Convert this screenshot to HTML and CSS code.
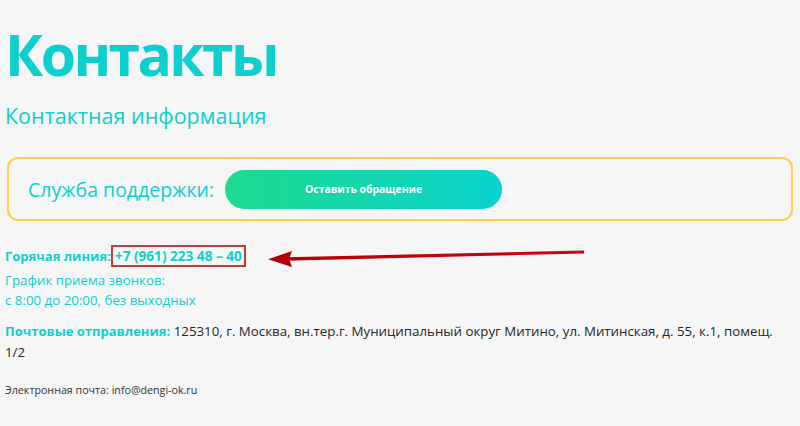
FILE: index.html
```html
<!DOCTYPE html>
<html lang="ru">
<head>
<meta charset="utf-8">
<title>Контакты</title>
<link rel="stylesheet" href="styles.css">
</head>
<body>
<main class="page">
  <h1 class="title">Контакты</h1>
  <h2 class="subtitle">Контактная информация</h2>
  <section class="support">
    <span class="support-label">Служба поддержки:</span>
    <a class="support-btn" href="#">Оставить обращение</a>
  </section>
  <div class="contacts">
    <p class="hotline"><b>Горячая линия:</b><span class="phone">+7 (961) 223 48 – 40</span></p>
    <p class="schedule">График приема звонков:<br>с 8:00 до 20:00, без выходных</p>
    <p class="post"><b>Почтовые отправления:</b> 125310, г. Москва, вн.тер.г. Муниципальный округ Митино, ул. Митинская, д. 55, к.1, помещ. 1/2</p>
    <p class="email">Электронная почта: info@dengi-ok.ru</p>
  </div>
  <svg class="arrow" width="330" height="30" viewBox="0 0 330 30" aria-hidden="true">
    <defs>
      <linearGradient id="ag" x1="0" x2="1" y1="0" y2="0">
        <stop offset="0" stop-color="#b4000a"/>
        <stop offset="1" stop-color="#d4000c"/>
      </linearGradient>
    </defs>
    <path d="M20 17.2 L318 10.6 L318 13.4 L20 20.8 Z" fill="url(#ag)"/>
    <path d="M2 19.2 L26 11 L23 19 L26 27 Z" fill="#b1000a"/>
  </svg>
</main>
</body>
</html>
```
FILE: styles.css
```css
html, body {
  margin: 0;
  padding: 0;
  background: #f6f6f6;
}
body {
  font-family: "Open Sans", "Noto Sans", sans-serif;
  color: #2a2a2a;
}
.page {
  position: relative;
  padding: 0 7px 0 5px;
}
.title {
  margin: 0;
  padding: 26px 0 0 0;
  font-size: 57px;
  line-height: 56px;
  font-weight: 700;
  color: #0dcfcf;
  letter-spacing: -2.6px;
}
.subtitle {
  margin: 0;
  padding-top: 20px;
  font-size: 21.5px;
  line-height: 28px;
  font-weight: 400;
  color: #0dcfcf;
}
.support {
  margin: 27px 0 0 2px;
  height: 60px;
  border: 2px solid #ffcf4a;
  border-radius: 11px;
  display: flex;
  align-items: center;
  padding-left: 19px;
  gap: 11px;
}
.support-label {
  font-size: 19.5px;
  color: #0dcfcf;
}
.support-btn {
  width: 277px;
  height: 39px;
  border-radius: 20px;
  background: linear-gradient(90deg, #1ddb8e 0%, #0ad3cf 100%);
  color: #fff;
  font-size: 10.4px;
  font-weight: 700;
  text-decoration: none;
  display: flex;
  align-items: center;
  justify-content: center;
}
.contacts {
  padding-top: 23px;
  font-size: 13.3px;
}
.contacts p {
  margin: 0;
}
.contacts b {
  color: #0dcfcf;
  font-weight: 700;
  font-size: 13px;
}
.hotline {
  line-height: 24px;
  color: #0dcfcf;
  padding-bottom: 2px;
}
.phone {
  display: inline-block;
  margin-left: 0;
  font-weight: 700;
  font-size: 13.6px;
  border: 2px solid #c33c3c;
  padding: 0 2px;
  line-height: 18px;
}
.schedule {
  color: #0dcfcf;
  line-height: 20px;
}
.post {
  margin-top: 11px !important;
  line-height: 21px;
  font-size: 13.3px;
  color: #262626;
}
.email {
  margin-top: 19px !important;
  font-size: 10.7px;
  line-height: 16px;
  color: #333;
}
.arrow {
  position: absolute;
  left: 266px;
  top: 240px;
}
```
